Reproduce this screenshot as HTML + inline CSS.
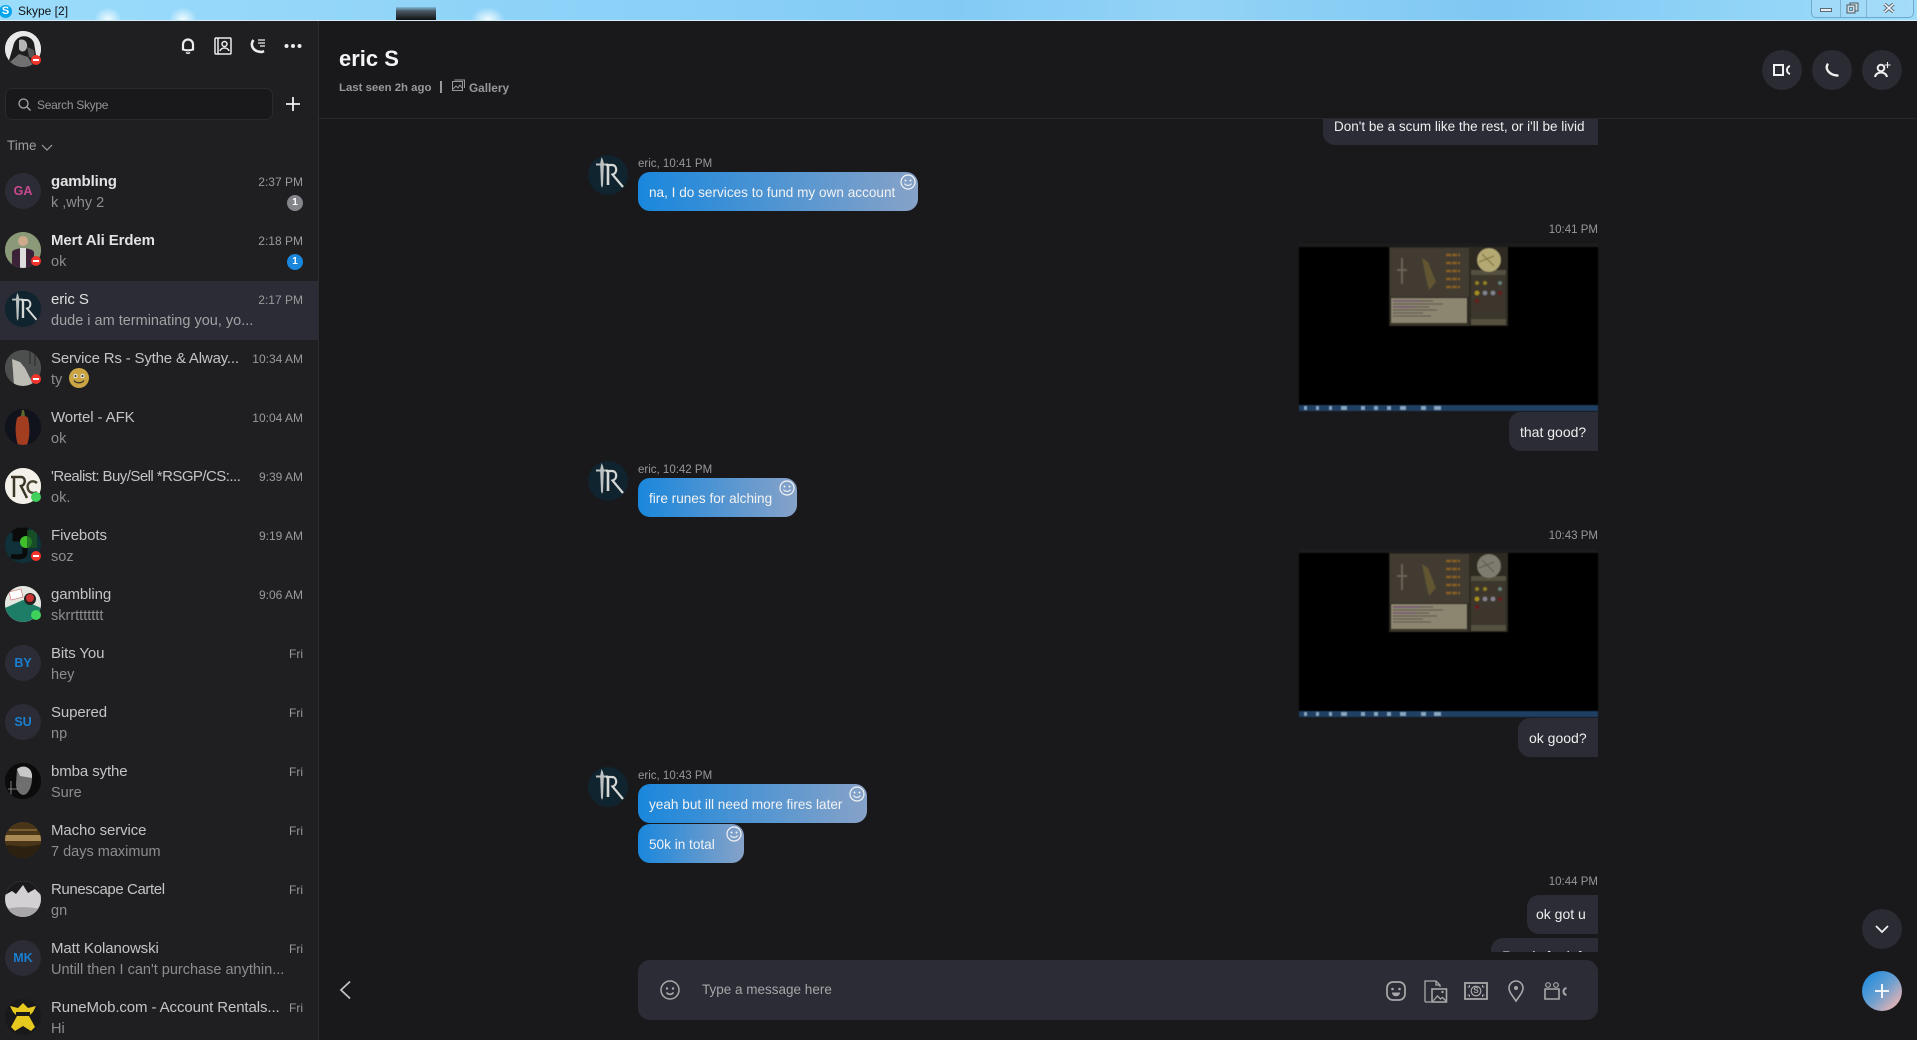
<!DOCTYPE html>
<html><head><meta charset="utf-8"><title>Skype</title>
<style>
html,body{margin:0;padding:0;background:#19191c;width:1917px;height:1040px;overflow:hidden}
body{position:relative;font-family:"Liberation Sans",sans-serif;color:#ddd}
div,span,svg{position:absolute;display:block;box-sizing:border-box}
.tx{white-space:nowrap;line-height:20px;height:20px}
#side{left:0;top:21px;width:319px;height:1019px;background:#1f1f22;border-right:1px solid #2c2c33}
.n{left:51px;margin-top:1px;font-size:15px;color:#c4c4c4;white-space:nowrap;line-height:20px;height:20px;letter-spacing:-.1px}
.n.b{font-weight:bold;color:#e2e2e2}
.p{left:51px;margin-top:1px;font-size:14.5px;color:#8d8d8f;white-space:nowrap;line-height:20px;height:20px}
.t{left:213px;margin-top:1px;width:90px;text-align:right;font-size:12px;color:#9a9a9c;line-height:20px;height:20px}
.a{left:5px;width:36px;height:36px;border-radius:50%;overflow:hidden;background:#2b2c35}
.a svg{left:0;top:0;width:36px;height:36px}
.i{left:5px;width:36px;height:36px;border-radius:50%;background:#2b2c35;text-align:center;font-weight:bold;font-size:12.5px;line-height:36px;color:#1a7fd0}
.st{left:31px;width:10px;height:10px;border-radius:50%;background:#f0352c}
.st:after{content:"";position:absolute;left:2px;top:4px;width:6px;height:2px;background:#fff}
.on{left:31px;width:10px;height:10px;border-radius:50%;background:#3fd15c}
.b1{left:287px;width:16px;height:16px;border-radius:50%;color:#fff;font-size:10px;font-weight:bold;text-align:center;line-height:16px}
.bu{background:linear-gradient(90deg,#1a87dc,#86a2c8);border-radius:12px;color:#f2f2f2;font-size:13.6px;line-height:41px;height:39px;left:638px;padding-left:11px;white-space:nowrap}
.me{background:#2b2c35;border-radius:12px 0 0 12px;color:#eee;font-size:14px;line-height:41px;height:39px;white-space:nowrap;text-align:left;padding-left:11px}
.sm{width:16px;height:16px}
.ts{font-size:11.5px;color:#97979a;white-space:nowrap;line-height:16px;height:16px}
.cb{width:40px;height:40px;border-radius:50%;background:#2a2b33}
.ic{overflow:visible}
</style></head><body>

<!-- title bar -->
<div style="left:0;top:0;width:1917px;height:20px;background:linear-gradient(90deg,#9bdcfb 0%,#8fd3f8 25%,#83cbf5 50%,#93d3f6 62%,#7fc8f3 78%,#9ddcfa 100%)"></div>
<div style="left:95px;top:8px;width:26px;height:12px;background:radial-gradient(ellipse at 50% 100%,#f2fbff,rgba(200,235,255,0) 75%)"></div>
<div style="left:170px;top:8px;width:26px;height:12px;background:radial-gradient(ellipse at 50% 100%,#f2fbff,rgba(200,235,255,0) 75%)"></div>
<div style="left:396px;top:7px;width:40px;height:13px;background:linear-gradient(rgba(70,90,102,.2),#4a5a66 30%,#111)"></div>
<div style="left:472px;top:8px;width:32px;height:12px;background:radial-gradient(ellipse at 50% 100%,#f2fbff,rgba(200,235,255,0) 75%)"></div>
<div style="left:0;top:20px;width:1917px;height:1px;background:#d8edf8"></div>
<div style="left:-1px;top:5px;width:13px;height:13px;border-radius:50%;background:#06a4ea;color:#fff;font:bold 11px/13px 'Liberation Sans',sans-serif;text-align:center">S</div>
<div class="tx" style="left:18px;top:1px;font-size:12px;color:#111">Skype [2]</div>
<div style="left:1811px;top:-2px;width:103px;height:20px;border:1px solid #6fa9cb;border-radius:0 0 5px 5px;background:rgba(170,220,248,.55)"></div>
<div style="left:1840px;top:0;width:1px;height:17px;background:#7fb2d0"></div>
<div style="left:1866px;top:0;width:1px;height:17px;background:#7fb2d0"></div>
<div style="left:1820px;top:8px;width:12px;height:4px;background:#e8eef2;border:1px solid #5a6a76"></div>
<svg style="left:1846px;top:2px;width:13px;height:12px" viewBox="0 0 13 12"><rect x="4" y="1" width="8" height="8" fill="#cfdde6" stroke="#4a5a66"/><rect x="1" y="3" width="8" height="8" fill="#cfdde6" stroke="#4a5a66"/><rect x="3.500" y="5.500" width="3" height="3" fill="#8fd3f8" stroke="#4a5a66" stroke-width=".7"/></svg>
<svg style="left:1883px;top:3px;width:12px;height:10px" viewBox="0 0 12 10"><path d="M1.500 1L10.500 9M10.500 1L1.500 9" stroke="#4a5a66" stroke-width="3.400"/><path d="M1.500 1L10.500 9M10.500 1L1.500 9" stroke="#eef2f5" stroke-width="1.600"/></svg>

<!-- sidebar -->
<div id="side" style="top:21px"></div>
<div class="a" style="top:31px;background:#ddd"><svg viewBox="0 0 36 36"><rect width="36" height="36" fill="#e8e8e8"/><path d="M8 16C10 3 25 2 29 12L33 36H2Z" fill="#1d1d1d"/><path d="M14 9c5-2 9 2 8 7s-6 6-8 2z" fill="#b5b5b5"/><path d="M5 31l9-8 9 3 6 10H5z" fill="#707070"/><path d="M22 16l7 3 1 9-6-2z" fill="#555"/></svg></div>
<div class="st" style="top:55px;left:31px"></div>

<svg class="ic" style="left:181px;top:38px;width:14px;height:16px" viewBox="0 0 14 16" fill="none" stroke="#ececec"><path d="M2 11.500V6.500a5 5 0 0 1 10 0v5c-3 1-7 1-10 0z" stroke-width="2.200"/><path d="M5 14.500c1 1 3 1 4 0" stroke-width="1.400"/></svg>
<svg class="ic" style="left:214px;top:37px;width:18px;height:18px" viewBox="0 0 18 18" fill="none" stroke="#ececec" stroke-width="1.500"><rect x="1" y="1" width="16" height="16" rx="1"/><path d="M4 1v16" /><circle cx="10.500" cy="7" r="2.500"/><path d="M6 14c1-4 8-4 9 0"/></svg>
<svg class="ic" style="left:250px;top:38px;width:17px;height:16px" viewBox="0 0 17 16" fill="none" stroke="#ececec"><path d="M3.500 2C0 6 2 14 12 14l2-1" stroke-width="2.600"/><path d="M8 2h7M8 5h7M10 8h5" stroke-width="1.200"/></svg>
<svg class="ic" style="left:284px;top:43px;width:18px;height:6px" viewBox="0 0 18 6" fill="#ececec"><circle cx="2.500" cy="3" r="2"/><circle cx="9" cy="3" r="2"/><circle cx="15.500" cy="3" r="2"/></svg>

<div style="left:5px;top:88px;width:268px;height:32px;background:#19191c;border:1px solid #2a2a31;border-radius:7px"></div>
<svg class="ic" style="left:18px;top:98px;width:13px;height:13px" viewBox="0 0 13 13" fill="none" stroke="#a8a8a8" stroke-width="1.300"><circle cx="5.500" cy="5.500" r="4.500"/><path d="M9 9l3.500 3.500"/></svg>
<div class="tx" style="left:37px;top:95px;font-size:12px;letter-spacing:-.3px;color:#949496">Search Skype</div>
<svg class="ic" style="left:286px;top:97px;width:14px;height:14px" viewBox="0 0 14 14" stroke="#f0f0f0" stroke-width="1.800"><path d="M7 0v14M0 7h14"/></svg>
<div class="tx" style="left:7px;top:136px;font-size:13.500px;color:#9c9c9e">Time</div>
<svg class="ic" style="left:41px;top:144px;width:12px;height:8px" viewBox="0 0 12 8" fill="none" stroke="#9c9c9e" stroke-width="1.200"><path d="M1 1l5 5 5-5"/></svg>

<!-- rows -->
<div style="left:0;top:281px;width:318px;height:59px;background:#2b2c35"></div>

<div class="i" style="top:173px;color:#c9488f">GA</div>
<div class="n b" style="top:171px">gambling</div><div class="t" style="top:171px">2:37 PM</div>
<div class="p" style="top:192px">k ,why 2</div>
<div class="b1" style="top:195px;background:#84858a">1</div>

<div class="a" style="top:232px;background:#6f7f60"><svg viewBox="0 0 36 36"><rect width="36" height="36" fill="#8a9a78"/><circle cx="18" cy="9" r="5" fill="#cfa98c"/><path d="M7 36V20c2-5 20-5 22 0v16z" fill="#3c2238"/><rect x="15" y="16" width="6" height="20" fill="#ddd"/></svg></div>
<div class="st" style="top:256px"></div>
<div class="n b" style="top:230px">Mert Ali Erdem</div><div class="t" style="top:230px">2:18 PM</div>
<div class="p" style="top:251px">ok</div>
<div class="b1" style="top:254px;background:#1a87dc">1</div>

<div class="a" style="top:291px;background:#0f2230"><svg viewBox="0 0 40 40"><use href="#rs"/></svg></div>
<div class="n" style="top:289px;color:#e0e0e0">eric S</div><div class="t" style="top:289px">2:17 PM</div>
<div class="p" style="top:310px;color:#a2a2a4">dude i am terminating you, yo...</div>

<div class="a" style="top:350px;background:#555"><svg viewBox="0 0 36 36"><rect width="36" height="36" fill="#4d4f4f"/><path d="M7 9l8 3 5 6 9 18H9l-1-15z" fill="#bdbdb5"/><path d="M24 0h2v14h-2zM29 0h2v16h-2z" fill="#3a3c3c"/></svg></div>
<div class="st" style="top:374px"></div>
<div class="n" style="top:348px;letter-spacing:-.18px">Service Rs - Sythe &amp; Alway...</div><div class="t" style="top:348px">10:34 AM</div>
<div class="p" style="top:369px">ty</div>
<svg style="left:69px;top:368px;width:20px;height:20px" viewBox="0 0 20 20"><circle cx="10" cy="10" r="10" fill="#cba544"/><circle cx="6.500" cy="8" r="2" fill="#eee"/><circle cx="13.500" cy="8" r="2" fill="#eee"/><circle cx="6.500" cy="8" r="1" fill="#222"/><circle cx="13.500" cy="8" r="1" fill="#222"/><path d="M5 12.500c2 3 8 3 10 0" stroke="#333" stroke-width="1.200" fill="none"/></svg>

<div class="a" style="top:409px;background:#10121c"><svg viewBox="0 0 36 36"><rect width="36" height="36" fill="#10121c"/><path d="M12 9c3-3 9-3 11 0 2 9 2 19-1 27H13C10 27 10 17 12 9z" fill="#a33d20"/><path d="M16 7l1-6h2l1 6z" fill="#5b6a2a"/></svg></div>
<div class="n" style="top:407px">Wortel - AFK</div><div class="t" style="top:407px">10:04 AM</div>
<div class="p" style="top:428px">ok</div>

<div class="a" style="top:468px;background:#f2f0e8"><svg viewBox="0 0 36 36"><rect width="36" height="36" fill="#f2f0e8"/><path d="M6 9h10c5 0 5 8 0 9l6 12M9 9v20" fill="none" stroke="#3a3524" stroke-width="2.500"/><path d="M32 15c-5-4-11 0-9 6 1 4 6 5 9 3" fill="none" stroke="#4a4530" stroke-width="2.500"/></svg></div>
<div class="on" style="top:492px"></div>
<div class="n" style="top:466px;letter-spacing:-.55px">'Realist: Buy/Sell *RSGP/CS:...</div><div class="t" style="top:466px">9:39 AM</div>
<div class="p" style="top:487px">ok.</div>

<div class="a" style="top:527px;background:#123"><svg viewBox="0 0 36 36"><rect width="36" height="36" fill="#10303a"/><path d="M5 3h16v4H10v5h10v14c0 4-8 5-14 3" fill="none" stroke="#0b0b0b" stroke-width="5"/><circle cx="21" cy="15" r="6" fill="#3fbf2c"/><path d="M22 3h10v18H22z" fill="#1a5a20" opacity=".7"/></svg></div>
<div class="st" style="top:551px"></div>
<div class="n" style="top:525px">Fivebots</div><div class="t" style="top:525px">9:19 AM</div>
<div class="p" style="top:546px">soz</div>

<div class="a" style="top:586px;background:#ddd"><svg viewBox="0 0 36 36"><rect width="36" height="36" fill="#e4e6e0"/><path d="M0 22l18-8 18 8v14H0z" fill="#1d7d66"/><circle cx="25" cy="13" r="6" fill="#222"/><circle cx="25" cy="12" r="4" fill="#c33"/><path d="M4 6l12-3 2 8-12 3z" fill="#fff" stroke="#c66" stroke-width=".6"/></svg></div>
<div class="on" style="top:610px"></div>
<div class="n" style="top:584px">gambling</div><div class="t" style="top:584px">9:06 AM</div>
<div class="p" style="top:605px">skrrttttttt</div>

<div class="i" style="top:645px">BY</div>
<div class="n" style="top:643px">Bits You</div><div class="t" style="top:643px">Fri</div>
<div class="p" style="top:664px">hey</div>

<div class="i" style="top:704px">SU</div>
<div class="n" style="top:702px">Supered</div><div class="t" style="top:702px">Fri</div>
<div class="p" style="top:723px">np</div>

<div class="a" style="top:763px;background:#0a0a0a"><svg viewBox="0 0 36 36"><rect width="36" height="36" fill="#0b0b0b"/><path d="M12 6c6-5 16-2 15 9 0 9-4 17-9 17-4-1-7-5-7-11z" fill="#6f6f6f"/><path d="M12 6c6-5 16-2 15 9l-12-2z" fill="#c8c8c8"/><path d="M3 26h10M6 18v14" stroke="#999" stroke-width=".8"/></svg></div>
<div class="n" style="top:761px">bmba sythe</div><div class="t" style="top:761px">Fri</div>
<div class="p" style="top:782px">Sure</div>

<div class="a" style="top:822px;background:#4a3418"><svg viewBox="0 0 36 36"><rect width="36" height="36" fill="#4a3519"/><rect y="13" width="36" height="6" fill="#a98a55"/><path d="M0 24c8-3 14 4 36-2v14H0z" fill="#2c2010"/><path d="M4 8h28" stroke="#7a5f34" stroke-width="2"/></svg></div>
<div class="n" style="top:820px">Macho service</div><div class="t" style="top:820px">Fri</div>
<div class="p" style="top:841px">7 days maximum</div>

<div class="a" style="top:881px;background:#ccc"><svg viewBox="0 0 36 36"><rect width="36" height="36" fill="#1a1a1c"/><path d="M0 14l7-4 4 3 7-9 5 8 7-4 6 6v22H0z" fill="#d2d0d2"/><path d="M2 28c10-3 22-2 34 0v8H2z" fill="#a8a6a8"/></svg></div>
<div class="n" style="top:879px;letter-spacing:-.4px">Runescape Cartel</div><div class="t" style="top:879px">Fri</div>
<div class="p" style="top:900px">gn</div>

<div class="i" style="top:940px">MK</div>
<div class="n" style="top:938px">Matt Kolanowski</div><div class="t" style="top:938px">Fri</div>
<div class="p" style="top:959px">Untill then I can't purchase anythin...</div>

<div class="a" style="top:999px;background:#19191b"><svg viewBox="0 0 36 36"><path d="M18 4l5 5 8-2-3 6-4 4 6 11-4 4-8-5-8 5-4-4 6-11-4-4-3-6 8 2z" fill="#e6c81e"/><rect x="11" y="13" width="14" height="4" fill="#1a1a1a"/></svg></div>
<div class="n" style="top:997px">RuneMob.com - Account Rentals...</div><div class="t" style="top:997px">Fri</div>
<div class="p" style="top:1018px">Hi</div>

<!-- header -->
<div style="left:319px;top:118px;width:1598px;height:1px;background:#27272c"></div>
<div class="tx" style="left:339px;top:45px;height:28px;line-height:28px;font-size:22px;font-weight:bold;color:#f4f4f4">eric S</div>
<div class="tx" style="left:339px;top:78px;font-size:11.400px;font-weight:bold;color:#98989a">Last seen 2h ago</div>
<div style="left:440px;top:81px;width:2px;height:12px;background:#98989a"></div>
<svg class="ic" style="left:452px;top:79px;width:13px;height:12px" viewBox="0 0 13 12" fill="none" stroke="#98989a"><rect x=".5" y="2.500" width="10" height="9"/><path d="M2.500 1h10v8"/><path d="M1 10l3-3 2 2 2-3 2 3"/></svg>
<div class="tx" style="left:469px;top:78px;font-size:11.800px;font-weight:bold;color:#98989a">Gallery</div>

<div class="cb" style="left:1762px;top:50px"></div>
<svg class="ic" style="left:1773px;top:63px;width:18px;height:14px" viewBox="0 0 18 14" fill="none" stroke="#f0f0f0" stroke-width="2"><rect x="1" y="2" width="9" height="10"/><path d="M17 3c-4 1-4 7 0 8"/></svg>
<div class="cb" style="left:1812px;top:50px"></div>
<svg class="ic" style="left:1825px;top:63px;width:14px;height:14px" viewBox="0 0 14 14" fill="none" stroke="#f0f0f0" stroke-width="2.400" stroke-linecap="round"><path d="M2.500 1.500C0 6 4 12 12.500 12.500"/></svg>
<div class="cb" style="left:1862px;top:50px"></div>
<svg class="ic" style="left:1874px;top:61px;width:17px;height:17px" viewBox="0 0 17 17" fill="none" stroke="#f0f0f0" stroke-width="2"><circle cx="7" cy="7" r="3.300"/><path d="M1 16c1-6 11-6 12 0"/><path d="M13.500 1v6M10.500 4h6" stroke-width="1.100"/></svg>

<!-- messages -->
<div style="left:319px;top:119px;width:1598px;height:833px;overflow:hidden">
  <div class="me" style="left:1004px;top:-12px;width:275px;height:38px;padding-left:11px;border-radius:0 0 0 12px;line-height:39px;font-size:13.500px">Don't be a scum like the rest, or i'll be livid</div>
</div>

<svg style="width:0;height:0;left:0;top:0" width="0" height="0"><defs>
<g id="rs"><rect width="40" height="40" fill="#10242f"/><path d="M13.500 2l1.500 3 .8 3.500H20v2h-4.200l-.8 20-1 2.500-1-2.500-.8-20H8v-2h4.200z" fill="#bcc0c0"/><path d="M18 10h6c5 0 6 8 .5 9.500L35 32" fill="none" stroke="#d6d8d6" stroke-width="2.200"/><path d="M20 10v20" stroke="#d6d8d6" stroke-width="2.600"/></g>
<symbol id="sml" viewBox="0 0 16 16" fill="none" stroke="#f4f4f4"><circle cx="8" cy="8" r="7" stroke-width="1.200"/><circle cx="5.500" cy="6.500" r="1" fill="#f4f4f4" stroke="none"/><circle cx="10.500" cy="6.500" r="1" fill="#f4f4f4" stroke="none"/><path d="M4.500 9.500c1.500 2.500 5.500 2.500 7 0" stroke-width="1.200"/></symbol>
<g id="shot">
<rect width="299" height="168" fill="#000"/><rect width="299" height="4" fill="#1c1c1c"/>
<rect x="90" y="4" width="119" height="79" fill="#2e2a22"/>
<rect x="91" y="5" width="79" height="49" fill="#423b31"/>
<rect x="92" y="55" width="76" height="25" fill="#8c8570"/>
<path d="M94 58h40M94 61h50M94 64h36M94 67h44M94 70h30M94 73h38" stroke="#5f584c" stroke-width="1"/>
<path d="M94 58h26M94 64h22" stroke="#6e4672" stroke-width="1"/>
<rect x="91" y="80" width="78" height="3" fill="#3a3428"/>
<rect x="172" y="32" width="35" height="44" fill="#3c362d"/>
<rect x="172" y="27" width="35" height="5" fill="#55503f"/><rect x="172" y="76" width="35" height="6" fill="#55503f"/>
<path d="M123 15l6 4 8 20-7 8-3-12z" fill="#625632"/>
<path d="M103 15v26M98 27h10" stroke="#6a6358" stroke-width="2"/>
<path d="M147 12h14M147 20h14M147 28h14M147 36h14M147 44h14" stroke="#8a6024" stroke-width="2.500" stroke-dasharray="5 1"/>
<circle cx="178" cy="40" r="2" fill="#98801c"/><circle cx="186" cy="40" r="2" fill="#98801c"/><circle cx="178" cy="50" r="2.500" fill="#a88e1c"/><circle cx="186" cy="50" r="2.500" fill="#80808e"/><circle cx="194" cy="50" r="2.500" fill="#80808e"/><circle cx="201" cy="50" r="2" fill="#6a1c1c"/><circle cx="178" cy="58" r="2" fill="#6a1c1c"/><circle cx="201" cy="40" r="2" fill="#66807a"/>
</g>
</defs></svg>

<svg style="left:588px;top:155px;width:40px;height:40px;border-radius:50%" viewBox="0 0 40 40"><use href="#rs"/></svg>
<div class="ts" style="left:638px;top:156px">eric, 10:41 PM</div>
<div class="bu" style="top:172px;width:280px">na, I do services to fund my own account</div>
<svg class="sm" style="left:900px;top:174px"><use href="#sml"/></svg>

<div class="ts" style="left:1500px;width:98px;text-align:right;top:222px">10:41 PM</div>
<svg style="left:1299px;top:243px;width:299px;height:168px;filter:blur(.5px)" viewBox="0 0 299 168">
<use href="#shot"/>
<circle cx="190" cy="17" r="12" fill="#b4a972"/><path d="M183 11l12 12M180 19l15-6" stroke="#7d7440"/>
<rect y="162" width="299" height="6" fill="#1f3f63"/><path d="M5 163h3v4H5zM17 163h3v4h-3zM30 163h3v4h-3zM42 163h6v4h-6zM62 163h4v4h-4zM75 163h4v4h-4zM88 163h4v4h-4zM101 163h6v4h-6zM122 163h5v4h-5zM135 163h7v4h-7z" fill="#8aa6bf"/>
</svg>
<div class="me" style="left:1509px;top:412px;width:89px;padding-left:11px">that good?</div>

<svg style="left:588px;top:461px;width:40px;height:40px;border-radius:50%" viewBox="0 0 40 40"><use href="#rs"/></svg>
<div class="ts" style="left:638px;top:462px">eric, 10:42 PM</div>
<div class="bu" style="top:478px;width:159px">fire runes for alching</div>
<svg class="sm" style="left:779px;top:480px"><use href="#sml"/></svg>

<div class="ts" style="left:1500px;width:98px;text-align:right;top:528px">10:43 PM</div>
<svg style="left:1299px;top:549px;width:299px;height:168px;filter:blur(.5px)" viewBox="0 0 299 168">
<use href="#shot"/>
<circle cx="190" cy="17" r="12" fill="#7e7c6e"/><path d="M183 11l12 12M180 19l15-6" stroke="#5d5b4e"/>
<rect y="162" width="299" height="6" fill="#1f3f63"/><path d="M5 163h3v4H5zM17 163h3v4h-3zM30 163h3v4h-3zM42 163h6v4h-6zM62 163h4v4h-4zM75 163h4v4h-4zM88 163h4v4h-4zM101 163h6v4h-6zM122 163h5v4h-5zM135 163h7v4h-7z" fill="#8aa6bf"/>
</svg>
<div class="me" style="left:1518px;top:718px;width:80px;padding-left:11px">ok good?</div>

<svg style="left:588px;top:767px;width:40px;height:40px;border-radius:50%" viewBox="0 0 40 40"><use href="#rs"/></svg>
<div class="ts" style="left:638px;top:768px">eric, 10:43 PM</div>
<div class="bu" style="top:784px;width:229px">yeah but ill need more fires later</div>
<svg class="sm" style="left:849px;top:786px"><use href="#sml"/></svg>
<div class="bu" style="top:824px;width:106px">50k in total</div>
<svg class="sm" style="left:726px;top:826px"><use href="#sml"/></svg>

<div class="ts" style="left:1500px;width:98px;text-align:right;top:874px">10:44 PM</div>
<div class="me" style="left:1527px;top:895px;width:71px;padding-left:9px;line-height:39px">ok got u</div>
<div style="left:1491px;top:938px;width:107px;height:14px;overflow:hidden">
  <div class="me" style="left:0;top:0;width:107px;padding-left:11px;line-height:36px">Ready for info</div>
</div>

<div class="cb" style="left:1862px;top:909px"></div>
<svg class="ic" style="left:1875px;top:925px;width:14px;height:9px" viewBox="0 0 14 9" fill="none" stroke="#f0f0f0" stroke-width="1.800"><path d="M1 1l6 6 6-6"/></svg>

<!-- composer -->
<svg class="ic" style="left:339px;top:980px;width:12px;height:20px" viewBox="0 0 12 20" fill="none" stroke="#c4c4c4" stroke-width="1.700"><path d="M11 1.500L2 10l9 8.500"/></svg>
<div style="left:638px;top:960px;width:960px;height:60px;background:#2b2c35;border-radius:12px"></div>
<svg class="ic" style="left:660px;top:980px;width:20px;height:20px" viewBox="0 0 20 20" fill="none" stroke="#a8a8aa" stroke-width="1.500"><circle cx="10" cy="10" r="9"/><circle cx="7" cy="8.500" r="1.200" fill="#a8a8aa" stroke="none"/><circle cx="13" cy="8.500" r="1.200" fill="#a8a8aa" stroke="none"/><path d="M6.500 12.500c2 2.500 5 2.500 7 0"/></svg>
<div class="tx" style="left:702px;top:980px;font-size:13.500px;color:#a6a6a8">Type a message here</div>

<svg class="ic" style="left:1386px;top:981px;width:20px;height:20px" viewBox="0 0 20 20" fill="none" stroke="#a8a8aa" stroke-width="1.700"><rect x="1" y="1" width="18" height="18" rx="6"/><circle cx="6.500" cy="8" r="1.300" fill="#a8a8aa" stroke="none"/><circle cx="13.500" cy="8" r="1.300" fill="#a8a8aa" stroke="none"/><path d="M6 11.500h8c0 5-8 5-8 0z" fill="#a8a8aa" stroke="none"/></svg>
<svg class="ic" style="left:1424px;top:980px;width:24px;height:23px" viewBox="0 0 24 23" fill="none" stroke="#a8a8aa" stroke-width="1.300"><path d="M1 22V1h11l4 4v2M1 22h6M12 1v4h4"/><rect x="8" y="9" width="14.500" height="13" stroke-width="1.600"/><circle cx="18.500" cy="12" r="1.200" fill="#a8a8aa" stroke="none"/><path d="M9 21l4.500-5 3 3 2-1.500 3.500 3.500"/></svg>
<svg class="ic" style="left:1464px;top:982px;width:24px;height:18px" viewBox="0 0 24 18" fill="none" stroke="#a8a8aa" stroke-width="1.800"><rect x="1" y="1" width="22" height="16"/><circle cx="12" cy="9" r="4.800" stroke-width="1.200"/><path d="M3.500 5h2V3M18.500 3v2h2M3.500 13h2v2M18.500 15v-2h2" stroke-width="1"/></svg>
<div class="tx" style="left:1472px;top:985px;width:8px;height:12px;line-height:12px;font-size:8px;font-weight:bold;color:#a8a8aa;text-align:center">S</div>
<svg class="ic" style="left:1508px;top:980px;width:16px;height:22px" viewBox="0 0 16 22" fill="none" stroke="#a8a8aa" stroke-width="1.600"><path d="M8 21C4 15 1 12 1 8a7 7 0 0 1 14 0c0 4-3 7-7 13z"/><circle cx="8" cy="8" r="2" fill="#a8a8aa" stroke="none"/></svg>
<svg class="ic" style="left:1544px;top:982px;width:24px;height:18px" viewBox="0 0 24 18" fill="none" stroke="#a8a8aa" stroke-width="1.600"><circle cx="4" cy="3" r="2.300" stroke-width="1.200"/><circle cx="12" cy="3" r="2.300" stroke-width="1.200"/><path d="M1 7h14v10H1z"/><path d="M22.500 6c-4 1-4 6 0 7" stroke-width="2"/></svg>

<div style="left:1862px;top:971px;width:40px;height:40px;border-radius:50%;background:linear-gradient(135deg,#2a8fdc 15%,#6a9fd0 50%,#e6b3b3 88%)"></div>
<svg class="ic" style="left:1875px;top:984px;width:14px;height:14px" viewBox="0 0 14 14" stroke="#fff" stroke-width="1.800"><path d="M7 0v14M0 7h14"/></svg>

</body></html>
